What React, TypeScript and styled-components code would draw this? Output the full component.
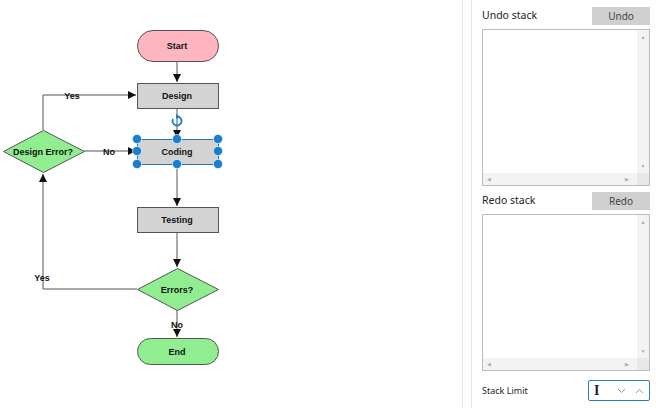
import styled, { createGlobalStyle } from "styled-components";

const GlobalStyle = createGlobalStyle`
  html, body {
    margin: 0;
    padding: 0;
    background: #ffffff;
  }
  body {
    font-family: "Noto Sans", "Open Sans", sans-serif;
  }
`;

interface StackBoxProps {
  title: string;
  action: string;
}

function StackBox({ title, action }: StackBoxProps) {
  return (
    <Section>
      <SectionHead>
        <SectionTitle>{title}</SectionTitle>
        <GrayButton>{action}</GrayButton>
      </SectionHead>
      <ListBox>
        <ListBody />
        <VScroll>
          <Arrow>▲</Arrow>
          <Arrow>▼</Arrow>
        </VScroll>
        <HScroll>
          <Arrow>◀</Arrow>
          <Arrow>▶</Arrow>
        </HScroll>
        <Corner />
      </ListBox>
    </Section>
  );
}

function Diagram() {
  const handles = [
    [137, 139], [177, 139], [218, 139],
    [137, 151], [218, 151],
    [137, 164], [177, 164], [218, 164],
  ];
  return (
    <svg width="462" height="408" viewBox="0 0 462 408">
      <defs>
        <marker id="tri" viewBox="0 0 10 10" refX="10" refY="5" markerWidth="8" markerHeight="8" orient="auto">
          <path d="M0,0 L10,5 L0,10 z" fill="#111" />
        </marker>
      </defs>
      <g fill="none" stroke="#555" strokeWidth="1">
        <line x1="177" y1="61" x2="177" y2="82" markerEnd="url(#tri)" />
        <line x1="177" y1="108" x2="177" y2="138" markerEnd="url(#tri)" />
        <line x1="177" y1="164" x2="177" y2="206" markerEnd="url(#tri)" />
        <line x1="177" y1="233" x2="177" y2="267" markerEnd="url(#tri)" />
        <line x1="177" y1="310" x2="177" y2="337" markerEnd="url(#tri)" />
        <polyline points="137,289 43,289 43,174" markerEnd="url(#tri)" />
        <polyline points="43,130 43,95 136,95" markerEnd="url(#tri)" />
        <line x1="84" y1="151" x2="136" y2="151" markerEnd="url(#tri)" />
      </g>

      <rect x="137.5" y="30.5" width="81" height="31" rx="15.5" fill="#ffb6c1" stroke="#555" />
      <rect x="137.5" y="83.5" width="81" height="25" fill="#d3d3d3" stroke="#555" />
      <rect x="137.5" y="139.5" width="81" height="25" fill="#d3d3d3" stroke="#555" />
      <rect x="137.5" y="207.5" width="81" height="25" fill="#d3d3d3" stroke="#555" />
      <polygon points="177.5,268.5 218.5,289.5 177.5,310.5 137.5,289.5" fill="#90ee90" stroke="#555" />
      <polygon points="43.5,130.5 84.5,151.5 43.5,172.5 3.5,151.5" fill="#90ee90" stroke="#555" />
      <rect x="137.5" y="338.5" width="81" height="26" rx="13" fill="#90ee90" stroke="#555" />

      <g fontFamily="Liberation Sans, Arial, sans-serif" fontSize="9" fontWeight="bold" fill="#111" textAnchor="middle">
        <text x="177" y="48.5">Start</text>
        <text x="177" y="99">Design</text>
        <text x="177" y="155">Coding</text>
        <text x="177" y="223">Testing</text>
        <text x="177" y="292.5">Errors?</text>
        <text x="43" y="154.5">Design Error?</text>
        <text x="177" y="355">End</text>
        <text x="72" y="98.5">Yes</text>
        <text x="109" y="154.5">No</text>
        <text x="42" y="280.5">Yes</text>
        <text x="177" y="327.5">No</text>
      </g>

      <rect x="137.5" y="139.5" width="81" height="25" fill="none" stroke="#1a7fcf" strokeDasharray="2 1" />
      <path d="M177,116.5 A4.5,4.5 0 1 1 173,119" fill="none" stroke="#1a7fcf" strokeWidth="1.8" />
      <path d="M176,114 L180,116.5 L176,119 z" fill="#1a7fcf" />
      {handles.map(([x, y]) => (
        <circle key={`${x}-${y}`} cx={x} cy={y} r="4.6" fill="#1a7fcf" stroke="#fff" strokeWidth="0.6" />
      ))}
    </svg>
  );
}

export default function App() {
  return (
    <>
      <GlobalStyle />
      <Page>
        <Canvas>
          <Diagram />
        </Canvas>
        <Panel>
          <StackBox title="Undo stack" action="Undo" />
          <StackBox title="Redo stack" action="Redo" />
          <LimitRow>
            <LimitLabel>Stack Limit</LimitLabel>
            <Spinner>
              <Caret>I</Caret>
              <Chevrons>
                <svg width="9" height="6" viewBox="0 0 9 6">
                  <path d="M1,1 L4.5,4.5 L8,1" fill="none" stroke="#999" strokeWidth="1" />
                </svg>
                <svg width="9" height="6" viewBox="0 0 9 6">
                  <path d="M1,5 L4.5,1.5 L8,5" fill="none" stroke="#999" strokeWidth="1" />
                </svg>
              </Chevrons>
            </Spinner>
          </LimitRow>
        </Panel>
      </Page>
    </>
  );
}

const Page = styled.div`
  display: flex;
  width: 656px;
  height: 408px;
  overflow: hidden;
`;

const Canvas = styled.div`
  width: 462px;
  height: 408px;
  border-right: 1px solid #e6e6e6;
  flex-shrink: 0;
`;

const Panel = styled.div`
  margin-left: 8px;
  border-left: 1px solid #e6e6e6;
  padding: 7px 6px 0 10px;
  width: 169px;
  display: flex;
  flex-direction: column;
`;

const Section = styled.div`
  display: flex;
  flex-direction: column;
  gap: 4px;
  margin-bottom: 6px;
`;

const SectionHead = styled.div`
  display: flex;
  align-items: center;
  justify-content: space-between;
  height: 18px;
`;

const SectionTitle = styled.span`
  font-size: 10.5px;
  color: #222;
  margin-top: -2px;
`;

const GrayButton = styled.div`
  width: 58px;
  height: 18px;
  background: #d0d0d0;
  color: #444;
  font-size: 10px;
  display: flex;
  align-items: center;
  justify-content: center;
`;

const ListBox = styled.div`
  height: 155px;
  border: 1px solid #bcbcbc;
  display: grid;
  grid-template-columns: 1fr 12px;
  grid-template-rows: 1fr 12px;
  background: #fff;
`;

const ListBody = styled.div`
  background: #fff;
`;

const VScroll = styled.div`
  background: #f3f3f3;
  display: flex;
  flex-direction: column;
  justify-content: space-between;
  align-items: center;
  padding: 4px 0;
`;

const HScroll = styled.div`
  background: #f3f3f3;
  display: flex;
  justify-content: space-between;
  align-items: center;
  padding: 0 8px 0 4px;
`;

const Corner = styled.div`
  background: #e8e8e8;
`;

const Arrow = styled.span`
  font-size: 5px;
  line-height: 6px;
  color: #a8a8a8;
`;

const LimitRow = styled.div`
  display: flex;
  align-items: center;
  justify-content: space-between;
  margin-top: 3px;
`;

const LimitLabel = styled.span`
  font-size: 9px;
  color: #222;
`;

const Spinner = styled.div`
  box-sizing: border-box;
  width: 62px;
  height: 21px;
  border: 1.5px solid #2b7bc0;
  border-radius: 2px;
  display: flex;
  align-items: center;
  justify-content: space-between;
  padding: 0 5px;
`;

const Caret = styled.span`
  font-family: "Liberation Serif", serif;
  font-size: 14px;
  font-weight: bold;
  color: #222;
`;

const Chevrons = styled.div`
  display: flex;
  gap: 9px;
  align-items: center;
`;
